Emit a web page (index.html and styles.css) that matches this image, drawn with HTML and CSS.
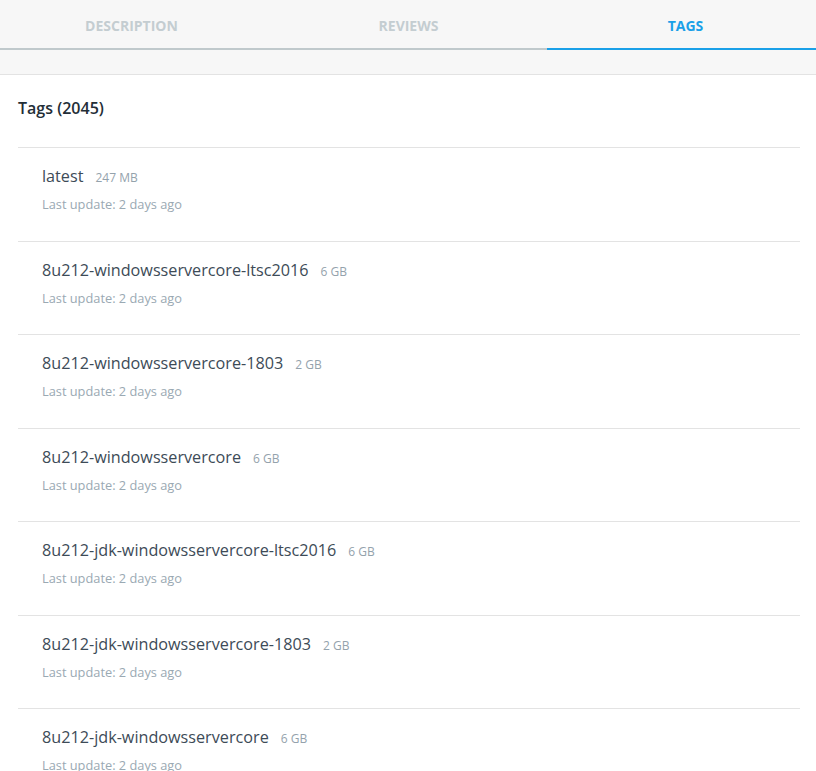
FILE: index.html
```html
<!DOCTYPE html>
<html>
<head>
<meta charset="utf-8">
<link rel="stylesheet" href="styles.css">
</head>
<body>
<div class="top">
  <nav class="tabs">
    <div class="tab">Description</div>
    <div class="tab">Reviews</div>
    <div class="tab active">Tags</div>
  </nav>
  <div class="spacer"></div>
</div>
<main class="content">
  <h2 class="heading">Tags (2045)</h2>
  <ul class="list">
    <li class="row"><div class="name">latest<span class="size">247 MB</span></div><div class="upd">Last update: 2 days ago</div></li>
    <li class="row"><div class="name">8u212-windowsservercore-ltsc2016<span class="size">6 GB</span></div><div class="upd">Last update: 2 days ago</div></li>
    <li class="row"><div class="name">8u212-windowsservercore-1803<span class="size">2 GB</span></div><div class="upd">Last update: 2 days ago</div></li>
    <li class="row"><div class="name">8u212-windowsservercore<span class="size">6 GB</span></div><div class="upd">Last update: 2 days ago</div></li>
    <li class="row"><div class="name">8u212-jdk-windowsservercore-ltsc2016<span class="size">6 GB</span></div><div class="upd">Last update: 2 days ago</div></li>
    <li class="row"><div class="name">8u212-jdk-windowsservercore-1803<span class="size">2 GB</span></div><div class="upd">Last update: 2 days ago</div></li>
    <li class="row"><div class="name">8u212-jdk-windowsservercore<span class="size">6 GB</span></div><div class="upd">Last update: 2 days ago</div></li>
  </ul>
</main>
</body>
</html>
```
FILE: styles.css
```css
html, body {
  margin: 0;
  padding: 0;
  background: #ffffff;
  font-family: "Open Sans", "Noto Sans", sans-serif;
  overflow: hidden;
}
.top {
  background: #f7f7f7;
  border-bottom: 1px solid #e3e3e3;
  overflow: hidden;
}
.tabs {
  display: grid;
  grid-template-columns: 1fr 1fr 1fr;
  width: 831px;
  margin-left: -7px;
}
.tab {
  height: 48px;
  line-height: 52px;
  text-align: center;
  text-transform: uppercase;
  font-size: 14px;
  font-weight: 700;
  color: #c4cdd1;
  border-bottom: 2px solid #c0c9cc;
}
.tab.active {
  color: #1aa0e8;
  border-bottom-color: #1aa0e8;
}
.spacer {
  height: 24px;
}
.content {
  padding: 0 16px 0 18px;
}
.heading {
  margin: 0;
  padding: 23px 0 29px;
  font-size: 16px;
  line-height: 20px;
  font-weight: 600;
  color: #232e37;
}
.list {
  list-style: none;
  margin: 0;
  padding: 0;
}
.row {
  border-top: 1px solid #e3e3e3;
  padding: 16px 24px 24.5px;
}
.name {
  font-size: 16.2px;
  line-height: 24px;
  color: #3d4b57;
}
.size {
  font-size: 12px;
  line-height: 1;
  color: #94a2ac;
  margin-left: 12px;
}
.upd {
  margin-top: 4px;
  font-size: 12.8px;
  line-height: 24px;
  color: #9aa9b3;
}
```
